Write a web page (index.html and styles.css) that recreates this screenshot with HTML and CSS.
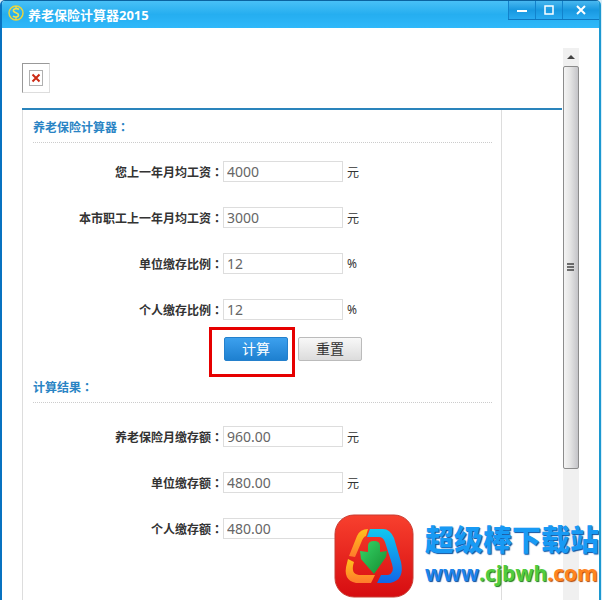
FILE: index.html
```html
<!DOCTYPE html>
<html lang="zh-CN">
<head>
    <meta charset="UTF-8">
    <meta name="viewport" content="width=device-width, initial-scale=1.0">
    <title>养老保险计算器2015</title>
    <link rel="stylesheet" href="styles.css">
</head>
<body>
    <div class="window">
        <header class="titlebar">
            <svg class="app-icon" width="18" height="18" viewBox="0 0 18 18" fill="none">
                <circle cx="9" cy="9" r="7" stroke="#e8d43c" stroke-width="1.500"/>
                <path d="M12 5.500C10 4 6 4.500 6.500 7C7 9 11.500 8.500 11.500 11C11.500 13.500 7.500 13.500 6 12" stroke="#f3e04a" stroke-width="1.600"/>
                <path d="M9 2V5M9 13V16" stroke="#f3e04a" stroke-width="1.200"/>
            </svg>
            <h1>养老保险计算器2015</h1>
            <div class="window-buttons">
                <button type="button" aria-label="最小化">
                    <svg width="12" height="12" viewBox="0 0 12 12"><path d="M1 7H11" stroke="#fff" stroke-width="2"/></svg>
                </button>
                <button type="button" aria-label="最大化">
                    <svg width="12" height="12" viewBox="0 0 12 12"><rect x="2" y="2" width="8" height="8" fill="none" stroke="#fff" stroke-width="1.500"/></svg>
                </button>
                <button type="button" class="close" aria-label="关闭">
                    <svg width="12" height="12" viewBox="0 0 12 12"><path d="M2 2L10 10M10 2L2 10" stroke="#fff" stroke-width="2"/></svg>
                </button>
            </div>
        </header>

        <div class="content">
            <main>
                <div class="missing-image">
                    <svg width="14" height="16" viewBox="0 0 14 16">
                        <rect x=".5" y=".5" width="13" height="15" fill="#fff" stroke="#b0b0b0"/>
                        <path d="M3.500 4.500L10.500 11.500M10.500 4.500L3.500 11.500" stroke="#cc2a14" stroke-width="2"/>
                    </svg>
                </div>
                <div class="banner-line"></div>
                <form class="panel" id="pensionForm">
                    <h2>养老保险计算器<span lang="zh-TW" class="colon">：</span></h2>
                    <div class="form-group">
                        <label for="salary">您上一年月均工资<span lang="zh-TW" class="colon">：</span></label>
                        <input type="text" id="salary" value="4000">
                        <span>元</span>
                    </div>
                    <div class="form-group">
                        <label for="citySalary">本市职工上一年月均工资<span lang="zh-TW" class="colon">：</span></label>
                        <input type="text" id="citySalary" value="3000">
                        <span>元</span>
                    </div>
                    <div class="form-group">
                        <label for="companyRate">单位缴存比例<span lang="zh-TW" class="colon">：</span></label>
                        <input type="text" id="companyRate" value="12">
                        <span>%</span>
                    </div>
                    <div class="form-group">
                        <label for="personalRate">个人缴存比例<span lang="zh-TW" class="colon">：</span></label>
                        <input type="text" id="personalRate" value="12">
                        <span>%</span>
                    </div>
                    <div class="buttons">
                        <div class="highlight">
                            <button type="button" class="btn btn-primary">计算</button>
                        </div>
                        <button type="reset" class="btn">重置</button>
                    </div>
                    <h2 class="result-title">计算结果<span lang="zh-TW" class="colon">：</span></h2>
                    <div class="form-group">
                        <label for="total">养老保险月缴存额<span lang="zh-TW" class="colon">：</span></label>
                        <input type="text" id="total" value="960.00">
                        <span>元</span>
                    </div>
                    <div class="form-group">
                        <label for="companyPay">单位缴存额<span lang="zh-TW" class="colon">：</span></label>
                        <input type="text" id="companyPay" value="480.00">
                        <span>元</span>
                    </div>
                    <div class="form-group">
                        <label for="personalPay">个人缴存额<span lang="zh-TW" class="colon">：</span></label>
                        <input type="text" id="personalPay" value="480.00">
                    </div>
                </form>
            </main>
            <div class="scrollbar">
                <div class="scroll-up">
                    <svg width="8" height="4" viewBox="0 0 8 4"><path d="M0 4L4 0L8 4Z" fill="#444"/></svg>
                </div>
                <div class="scroll-thumb">
                    <svg width="8" height="8" viewBox="0 0 8 8"><path d="M0 1H7M0 4H7M0 7H7" stroke="#444" stroke-width="1.500"/></svg>
                </div>
            </div>
        </div>

        <div class="watermark">
            <svg width="80" height="84" viewBox="0 0 80 84">
                <defs>
                    <linearGradient id="red" x1="0" y1="0" x2="0" y2="1">
                        <stop offset="0" stop-color="#f8402e"/>
                        <stop offset="1" stop-color="#d60c10"/>
                    </linearGradient>
                    <linearGradient id="blue" x1="0" y1="0" x2="0" y2="1">
                        <stop offset="0" stop-color="#10c8f0"/>
                        <stop offset="1" stop-color="#1266e8"/>
                    </linearGradient>
                    <linearGradient id="orange" x1="0" y1="0" x2="0" y2="1">
                        <stop offset="0" stop-color="#ffc21c"/>
                        <stop offset="1" stop-color="#ff7a2c"/>
                    </linearGradient>
                    <linearGradient id="green" x1="0" y1="0" x2="1" y2="1">
                        <stop offset="0" stop-color="#35d668"/>
                        <stop offset="1" stop-color="#168c30"/>
                    </linearGradient>
                </defs>
                <rect x="1" y="1" width="78" height="82" rx="19" fill="url(#red)" stroke="#c83a30"/>
                <path d="M34 15L32 22Q29 23 27 29L21 43L15 42L23 22Q26 15 34 15Z" fill="url(#orange)"/>
                <path d="M14 45L20 48Q16 60 25 61L41 61L37 69H22Q8 66 13 49Z" fill="url(#orange)"/>
                <path d="M36 15H49Q56 15 60 24L67 48Q71 66 56 69H43L47 61H54Q61 59 58 50L51 28Q49 23 45 23H33Z" fill="url(#blue)"/>
                <path d="M34 32Q34 27 40 27Q46 27 46 32V38L53 37L52 43L40 60L27 45L26 37L34 38Z" fill="url(#green)"/>
            </svg>
            <div class="site">
                <strong>超级棒下载站</strong>
                <a href="#"><span class="www">www</span><span class="domain">.cjbwh</span><span class="com">.com</span></a>
            </div>
        </div>
    </div>
</body>
</html>
```

FILE: styles.css
```css
* {
    box-sizing: border-box;
}
body {
    margin: 0;
    padding-right: 1px;
    background-color: #d8eefa;
    font-family: "Noto Sans", "Noto Sans CJK SC", sans-serif;
    font-size: 12px;
    color: #333;
}
.window {
    position: relative;
    display: flex;
    flex-direction: column;
    height: 100vh;
    min-height: 600px;
    overflow: hidden;
    background-color: #fff;
    border-left: 2px solid #0872c0;
    border-right: 2px solid #1c98d0;
    border-top: 1px solid #0b63a0;
    border-radius: 5px 5px 0 0;
}
.titlebar {
    display: flex;
    align-items: center;
    height: 27px;
    flex-shrink: 0;
    padding-left: 5px;
    background: linear-gradient(#48c0f6, #25aef0 50%, #2fb8fa);
}
.app-icon {
    margin-bottom: 4px;
}
.titlebar h1 {
    flex: 1;
    margin: 0 0 0 3px;
    font-size: 13px;
    color: #fff;
}
.window-buttons {
    display: flex;
    align-self: flex-start;
    height: 19px;
    border-bottom: 1px solid #0e78c0;
}
.window-buttons button {
    display: flex;
    align-items: center;
    justify-content: center;
    width: 27px;
    padding: 0;
    border: none;
    border-left: 1px solid #1282cc;
    background: linear-gradient(#48b8f0, #1898e0 50%, #28aaf0);
}
.window-buttons .close {
    width: 37px;
}
.content {
    display: flex;
    flex: 1;
    padding: 20px 20px 0;
    min-height: 0;
}
main {
    display: flex;
    flex-direction: column;
    flex: 1;
    padding-top: 15px;
}
.missing-image {
    display: flex;
    align-items: center;
    justify-content: center;
    width: 28px;
    height: 30px;
    border: 1px solid #ddd;
    border-top-color: #999;
    border-left-color: #999;
}
.banner-line {
    height: 2px;
    margin-top: 15px;
    background-color: #2a84bc;
}
.panel {
    flex: 1;
    margin-right: 60px;
    padding: 0 9px 0 10px;
    border-left: 1px solid #ddd;
    border-right: 1px solid #ddd;
}
.panel h2 {
    height: 33px;
    margin: 0;
    padding-top: 7px;
    border-bottom: 1px dotted #ccc;
    font-size: 12px;
    line-height: 20px;
    color: #2a84c4;
}
.colon {
    font-family: "Noto Sans CJK TC", sans-serif;
}
.form-group {
    display: flex;
    align-items: center;
    height: 21px;
    margin-bottom: 25px;
}
.panel h2 + .form-group {
    margin-top: 18px;
}
.panel .result-title {
    height: 26px;
    padding-top: 0;
}
.panel .result-title + .form-group {
    margin-top: 23px;
}
.form-group label {
    width: 190px;
    font-weight: bold;
    text-align: right;
}
.form-group input {
    width: 120px;
    height: 21px;
    margin-right: 4px;
    padding: 0 3px;
    border: 1px solid #ddd;
    font-family: inherit;
    font-size: 14px;
    color: #666;
}
.buttons {
    display: flex;
    align-items: center;
    height: 50px;
    margin: -18px 0 0 176px;
}
.highlight {
    display: flex;
    align-items: center;
    width: 86px;
    height: 50px;
    margin-right: 3px;
    padding: 0 0 6px 12px;
    border: 3px solid #e60000;
}
.btn {
    width: 64px;
    height: 24px;
    margin-bottom: 6px;
    padding: 0;
    border: 1px solid #bbb;
    border-radius: 2px;
    background: linear-gradient(#f8f8f8, #dcdcdc);
    font-family: inherit;
    font-size: 14px;
    line-height: 20px;
    color: #333;
}
.btn-primary {
    margin: 0;
    border-color: #2480cc;
    background: linear-gradient(#3ca0ee, #1e80d0);
    color: #fff;
}
.scrollbar {
    display: flex;
    flex-direction: column;
    width: 16px;
    margin-left: 1px;
    background-color: #f0f0f0;
}
.scroll-up {
    display: flex;
    align-items: center;
    justify-content: center;
    height: 18px;
}
.scroll-thumb {
    display: flex;
    align-items: center;
    justify-content: center;
    height: 73%;
    border: 1px solid #8c8c8c;
    border-radius: 2px;
    background: linear-gradient(to right, #f4f4f4, #e4e4e4 45%, #c4c4c8);
}
.watermark {
    position: absolute;
    right: 0;
    bottom: 2px;
    display: flex;
    align-items: center;
    gap: 11px;
}
.site {
    display: flex;
    flex-direction: column;
}
.site strong {
    font-family: "Liberation Sans", "Noto Sans CJK SC", sans-serif;
    font-size: 29px;
    font-weight: 900;
    line-height: 34px;
    color: #189af4;
    text-shadow: 1px 1px 1px #0a50a0;
}
.site a {
    font-family: "Open Sans", sans-serif;
    font-size: 21px;
    font-weight: bold;
    line-height: 30px;
    text-decoration: none;
}
.www {
    color: #1c84ec;
    text-shadow: 1px 1px 1px #0a4a9c;
}
.domain {
    color: #50cc40;
    text-shadow: 1px 1px 1px #1c7c1c;
}
.com {
    color: #ff8420;
    text-shadow: 1px 1px 1px #b04808;
}
```
